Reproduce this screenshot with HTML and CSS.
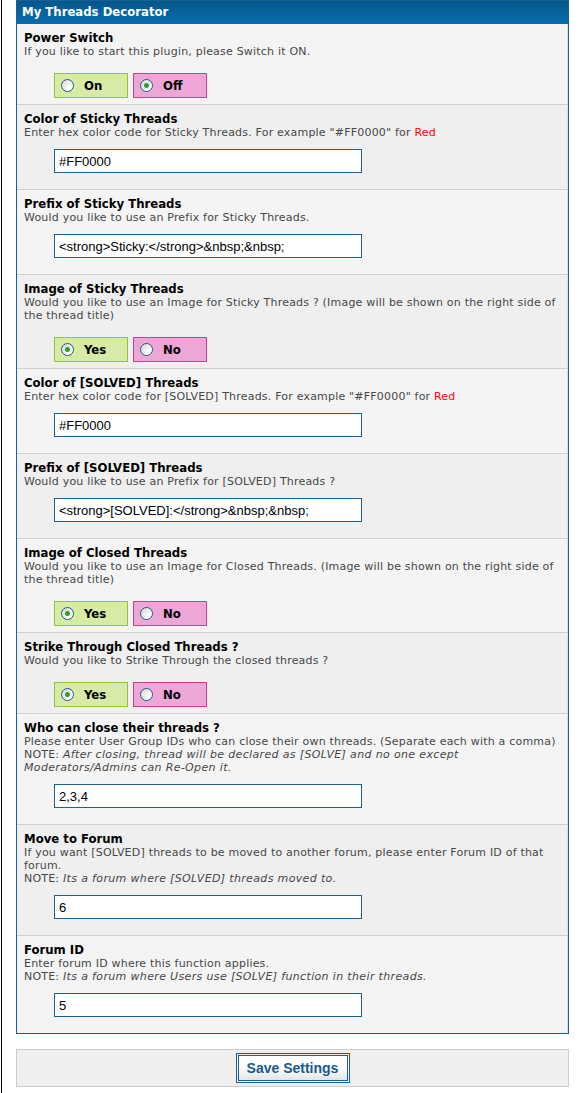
FILE: index.html
```html
<!DOCTYPE html>
<html lang="en">
<head>
<meta charset="utf-8">
<title>My Threads Decorator</title>
<link rel="stylesheet" href="styles.css">
</head>
<body>
<div class="page">
  <form class="panel">
    <div class="panel-head">My Threads Decorator</div>

    <div class="row odd">
      <div class="row-title">Power Switch</div>
      <div class="row-desc">If you like to start this plugin, please Switch it ON.</div>
      <div class="choices">
        <label class="choice yes"><input type="radio" name="power" class="radio">On</label>
        <label class="choice no"><input type="radio" name="power" class="radio" checked>Off</label>
      </div>
    </div>

    <div class="row even">
      <div class="row-title">Color of Sticky Threads</div>
      <div class="row-desc">Enter hex color code for Sticky Threads. For example "#FF0000" for <span class="red">Red</span></div>
      <div class="field"><input type="text" class="text-input" value="#FF0000"></div>
    </div>

    <div class="row odd">
      <div class="row-title">Prefix of Sticky Threads</div>
      <div class="row-desc">Would you like to use an Prefix for Sticky Threads.</div>
      <div class="field"><input type="text" class="text-input" value="&lt;strong&gt;Sticky:&lt;/strong&gt;&amp;nbsp;&amp;nbsp;"></div>
    </div>

    <div class="row even">
      <div class="row-title">Image of Sticky Threads</div>
      <div class="row-desc">Would you like to use an Image for Sticky Threads ? (Image will be shown on the right side of the thread title)</div>
      <div class="choices">
        <label class="choice yes"><input type="radio" name="stickyimg" class="radio" checked>Yes</label>
        <label class="choice no"><input type="radio" name="stickyimg" class="radio">No</label>
      </div>
    </div>

    <div class="row odd">
      <div class="row-title">Color of [SOLVED] Threads</div>
      <div class="row-desc">Enter hex color code for [SOLVED] Threads. For example "#FF0000" for <span class="red">Red</span></div>
      <div class="field"><input type="text" class="text-input" value="#FF0000"></div>
    </div>

    <div class="row even">
      <div class="row-title">Prefix of [SOLVED] Threads</div>
      <div class="row-desc">Would you like to use an Prefix for [SOLVED] Threads ?</div>
      <div class="field"><input type="text" class="text-input" value="&lt;strong&gt;[SOLVED]:&lt;/strong&gt;&amp;nbsp;&amp;nbsp;"></div>
    </div>

    <div class="row odd">
      <div class="row-title">Image of Closed Threads</div>
      <div class="row-desc">Would you like to use an Image for Closed Threads. (Image will be shown on the right side of the thread title)</div>
      <div class="choices">
        <label class="choice yes"><input type="radio" name="closedimg" class="radio" checked>Yes</label>
        <label class="choice no"><input type="radio" name="closedimg" class="radio">No</label>
      </div>
    </div>

    <div class="row even">
      <div class="row-title">Strike Through Closed Threads ?</div>
      <div class="row-desc">Would you like to Strike Through the closed threads ?</div>
      <div class="choices">
        <label class="choice yes"><input type="radio" name="strike" class="radio" checked>Yes</label>
        <label class="choice no"><input type="radio" name="strike" class="radio">No</label>
      </div>
    </div>

    <div class="row odd">
      <div class="row-title">Who can close their threads ?</div>
      <div class="row-desc">Please enter User Group IDs who can close their own threads. (Separate each with a comma)</div>
      <div class="row-desc">NOTE: <em>After closing, thread will be declared as [SOLVE] and no one except Moderators/Admins can Re-Open it.</em></div>
      <div class="field"><input type="text" class="text-input" value="2,3,4"></div>
    </div>

    <div class="row even">
      <div class="row-title">Move to Forum</div>
      <div class="row-desc">If you want [SOLVED] threads to be moved to another forum, please enter Forum ID of that forum.</div>
      <div class="row-desc">NOTE: <em>Its a forum where [SOLVED] threads moved to.</em></div>
      <div class="field"><input type="text" class="text-input" value="6"></div>
    </div>

    <div class="row odd last">
      <div class="row-title">Forum ID</div>
      <div class="row-desc">Enter forum ID where this function applies.</div>
      <div class="row-desc">NOTE: <em>Its a forum where Users use [SOLVE] function in their threads.</em></div>
      <div class="field"><input type="text" class="text-input" value="5"></div>
    </div>
  </form>

  <div class="save-bar">
    <button type="button" class="save-btn">Save Settings</button>
  </div>
</div>
</body>
</html>
```

FILE: styles.css
```css
html, body {
  margin: 0;
  padding: 0;
  background: #ffffff;
}

.page {
  margin-left: 1px;
  border-left: 1px solid #000000;
  padding: 0 15px 7px 14px;
  min-height: 1093px;
  box-sizing: border-box;
  font-family: "DejaVu Sans Condensed", "DejaVu Sans", sans-serif;
  font-stretch: condensed;
}

.panel {
  display: block;
  margin: 0;
  border: 1px solid #1a5f95;
  background: #f4f4f4;
}

.panel-head {
  height: 23px;
  line-height: 22px;
  padding-left: 5px;
  background: linear-gradient(#05568a, #0a6db0);
  color: #ffffff;
  font-weight: bold;
  font-size: 13px;
}

.row {
  padding: 6px 3px 0 7px;
  border-bottom: 1px solid #d0d0d0;
  border-right: 1px solid #dcdcdc;
}

.row.last {
  border-bottom: none;
}

.odd {
  background: #f4f4f4;
}

.even {
  background: #efefef;
}

.row-title {
  font-size: 13px;
  font-weight: bold;
  line-height: 15px;
  color: #000000;
}

.row-desc {
  font-family: "DejaVu Sans", Verdana, sans-serif;
  font-stretch: normal;
  font-size: 11px;
  letter-spacing: 0.2px;
  line-height: 13px;
  color: #474747;
}

.row-desc em {
  font-style: italic;
  letter-spacing: 0.35px;
}

.red {
  color: #ff0000;
}

.choices {
  display: flex;
  gap: 5px;
  margin-top: 15px;
  padding: 0 0 6px 30px;
}

.choice {
  display: flex;
  align-items: center;
  box-sizing: border-box;
  width: 74px;
  height: 25px;
  padding-left: 6px;
  border: 1px solid;
  font-size: 13px;
  font-weight: bold;
  color: #000000;
}

.choice.yes {
  background: #d8eba6;
  border-color: #8fc641;
}

.choice.no {
  background: #eca7d7;
  border-color: #c9418d;
}

.radio {
  appearance: none;
  -webkit-appearance: none;
  margin: 0 10px 0 0;
  width: 13px;
  height: 13px;
  box-sizing: border-box;
  border: 1px solid #1d5a8c;
  border-radius: 50%;
  background: linear-gradient(135deg, #d4d4cc, #ffffff 75%);
}

.radio:checked {
  background:
    radial-gradient(circle, #2ba02b 0, #2ba02b 2px, rgba(43, 160, 43, 0) 3px),
    linear-gradient(135deg, #d4d4cc, #ffffff 75%);
}

.field {
  margin-top: 10px;
  padding: 0 0 16px 30px;
}

.text-input {
  display: block;
  box-sizing: border-box;
  width: 308px;
  height: 24px;
  margin: 0;
  padding: 0 4px;
  border: 1px solid #1a5f95;
  background: #ffffff;
  font-family: "Liberation Sans", Arial, sans-serif;
  font-size: 13px;
  color: #000000;
  outline: none;
}

.save-bar {
  display: flex;
  justify-content: center;
  margin-top: 15px;
  padding: 3px;
  border: 1px solid #cdcdcd;
  background: #efefef;
}

.save-btn {
  width: 114px;
  height: 30px;
  padding: 0;
  border: 3px double #1a5f95;
  background: linear-gradient(#ffffff, #ffffff 45%, #e4e4e4);
  color: #175a8e;
  font-family: "Liberation Sans", Arial, sans-serif;
  font-size: 14px;
  font-weight: bold;
  cursor: pointer;
}
```
